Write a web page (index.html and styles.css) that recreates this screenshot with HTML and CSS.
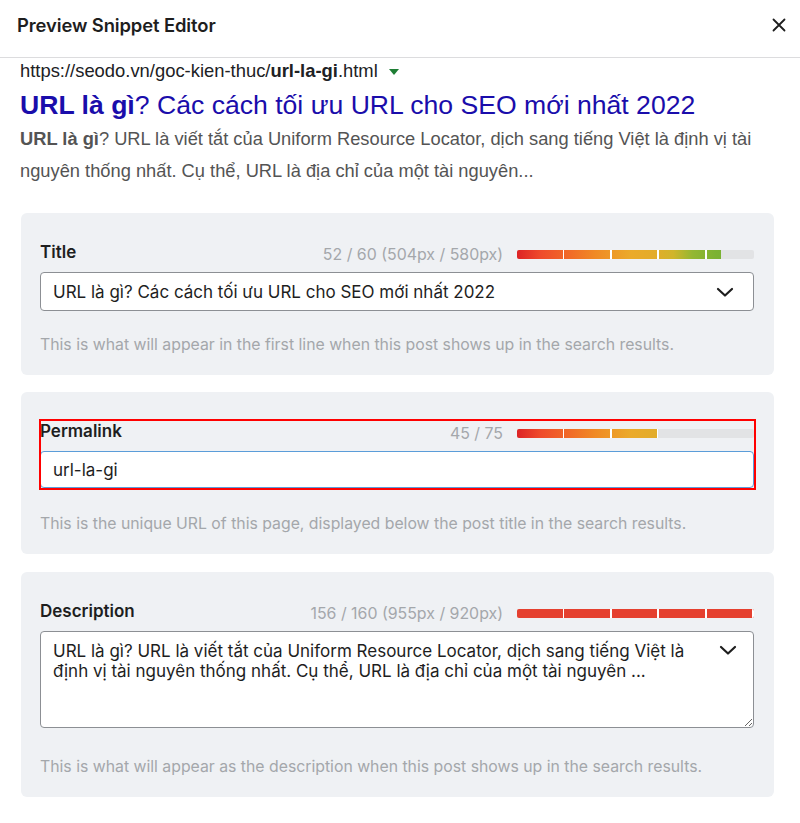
FILE: index.html
```html
<!DOCTYPE html>
<html lang="vi">
<head>
<meta charset="utf-8">
<title>Preview Snippet Editor</title>
<link rel="stylesheet" href="styles.css">
</head>
<body>
<header class="modal-header">
  <h1 class="modal-title">Preview Snippet Editor</h1>
  <button class="close-btn" aria-label="Close">
    <svg width="14" height="14" viewBox="0 0 14 14"><path d="M1.5 1.5 L12.5 12.5 M12.5 1.5 L1.5 12.5" stroke="#1e1e1e" stroke-width="1.8" stroke-linecap="round"/></svg>
  </button>
</header>

<section class="serp">
  <div class="serp-url">https://seodo.vn/goc-kien-thuc/<b>url-la-gi</b>.html <span class="serp-caret"></span></div>
  <div class="serp-title"><b>URL là gì</b>? Các cách tối ưu URL cho SEO mới nhất 2022</div>
  <div class="serp-desc"><b>URL là gì</b>? URL là viết tắt của Uniform Resource Locator, dịch sang tiếng Việt là định vị tài nguyên thống nhất. Cụ thể, URL là địa chỉ của một tài nguyên...</div>
</section>

<main class="fields">
  <div class="card">
    <div class="label-row">
      <span class="label">Title</span>
      <span class="counter">52 / 60 (504px / 580px)</span>
      <div class="bar"><div class="bar-fill grad" style="width: 86%"></div></div>
    </div>
    <div class="input input-select">
      <span class="input-text">URL là gì? Các cách tối ưu URL cho SEO mới nhất 2022</span>
      <svg class="chevron" width="18" height="12" viewBox="0 0 18 12"><path d="M2 3 L9 9.5 L16 3" fill="none" stroke="#1e1e1e" stroke-width="2.2" stroke-linecap="round" stroke-linejoin="round"/></svg>
    </div>
    <p class="help">This is what will appear in the first line when this post shows up in the search results.</p>
  </div>

  <div class="card card-permalink">
    <div class="label-row">
      <span class="label">Permalink</span>
      <span class="counter">45 / 75</span>
      <div class="bar"><div class="bar-fill grad" style="width: 59.5%"></div></div>
    </div>
    <div class="input input-focus">
      <span class="input-text">url-la-gi</span>
    </div>
    <p class="help help-permalink">This is the unique URL of this page, displayed below the post title in the search results.</p>
    <div class="highlight-box"></div>
  </div>

  <div class="card card-desc">
    <div class="label-row">
      <span class="label">Description</span>
      <span class="counter">156 / 160 (955px / 920px)</span>
      <div class="bar"><div class="bar-fill full-red" style="width: 100%"></div></div>
    </div>
    <div class="textarea-wrap">
      <textarea class="textarea">URL là gì? URL là viết tắt của Uniform Resource Locator, dịch sang tiếng Việt là định vị tài nguyên thống nhất. Cụ thể, URL là địa chỉ của một tài nguyên ...</textarea>
      <svg class="chevron chevron-overlay" width="18" height="12" viewBox="0 0 18 12"><path d="M2 3 L9 9.5 L16 3" fill="none" stroke="#1e1e1e" stroke-width="2.2" stroke-linecap="round" stroke-linejoin="round"/></svg>
    </div>
    <p class="help help-desc">This is what will appear as the description when this post shows up in the search results.</p>
  </div>
</main>
</body>
</html>
```

FILE: styles.css
```css
* { box-sizing: border-box; }
html, body { margin: 0; padding: 0; background: #fff; }
body {
  font-family: Inter, "Noto Sans", sans-serif;
  color: #1e1e1e;
  width: 800px;
}

.modal-header {
  height: 58px;
  border-bottom: 1px solid #dcdcde;
  display: flex;
  align-items: center;
  justify-content: space-between;
  padding: 0 14px 8px 17px;
}
.modal-title {
  margin: 0;
  font-size: 18.4px;
  font-weight: 600;
  letter-spacing: -0.1px;
}
.close-btn {
  border: 0;
  background: none;
  padding: 0;
  width: 14px;
  height: 14px;
  display: flex;
}

.serp {
  padding: 2px 10px 0 20px;
  font-family: "Liberation Sans", Arial, sans-serif;
}
.serp-url {
  font-size: 18.4px;
  line-height: 22px;
  color: #202124;
  display: flex;
  align-items: center;
  white-space: pre;
}
.serp-url b { font-weight: 700; }
.serp-caret {
  display: inline-block;
  width: 0; height: 0;
  border-left: 5px solid transparent;
  border-right: 5px solid transparent;
  border-top: 6px solid #1e7e34;
  margin-left: 6px;
  margin-top: 2px;
}
.serp-title {
  margin-top: 7px;
  font-size: 26.6px;
  line-height: 32px;
  color: #1a0dab;
}
.serp-title b { font-weight: 700; }
.serp-desc {
  margin-top: 2px;
  font-size: 18.3px;
  line-height: 32px;
  color: #545454;
}
.serp-desc b { color: #545454; font-weight: 700; }

.fields {
  margin: 26px 26px 0 21px;
  display: flex;
  flex-direction: column;
  gap: 17px;
}
.card {
  background: #eff1f4;
  border-radius: 6px;
  padding: 29px 20px 20px 19px;
}
.card-permalink { position: relative; }
.card-desc { margin-top: 1px; }

.label-row {
  display: flex;
  align-items: center;
  height: 20px;
  margin-bottom: 10px;
}
.label {
  font-size: 17px;
  font-weight: 600;
  color: #1e1e1e;
  flex: 1;
}
.counter {
  font-size: 15.9px;
  color: #a4a7ab;
  margin-right: 14px;
  margin-top: 4px;
}
.bar {
  width: 237px;
  height: 9px;
  background: #e2e3e5;
  border-radius: 2px;
  overflow: hidden;
  margin-top: 4px;
}
.bar-fill {
  height: 100%;
  position: relative;
}
.bar-fill::after {
  content: "";
  position: absolute;
  inset: 0;
  background: repeating-linear-gradient(to right, transparent 0, transparent 45.6px, #fff 45.6px, #fff 47.4px);
}
.grad {
  background: linear-gradient(to right, #dd2325 0%, #ef4b2b 10%, #f16a27 22%, #f08a24 33%, #ebaa2a 48%, #e3ac2a 58%, #d0b52b 66%, #94b732 74%, #7bb233 84%, #74ae30 100%);
  background-size: 237px 100%;
  background-repeat: no-repeat;
}
.full-red { background: #e5402f; }

.input {
  background: #fff;
  border: 1px solid #8c8f94;
  border-radius: 4px;
  display: flex;
  align-items: center;
  font-size: 17px;
  color: #1e1e1e;
}
.input-select {
  height: 39px;
  padding: 0 19px 0 12px;
  justify-content: space-between;
}
.input-focus {
  height: 37px;
  padding: 0 12px;
  border-color: #5b9dd9;
}
.input-text { white-space: nowrap; }

.help {
  margin: 24px 0 0 0;
  font-size: 15.8px;
  line-height: 20px;
  color: #a4a7ab;
}
.help-permalink { margin-top: 26px; }
.help-desc { margin-top: 29px; }

.textarea-wrap { position: relative; }
.textarea {
  display: block;
  width: 100%;
  height: 97px;
  resize: vertical;
  font-family: Inter, "Noto Sans", sans-serif;
  font-size: 17px;
  line-height: 20px;
  color: #1e1e1e;
  border: 1px solid #8c8f94;
  border-radius: 4px;
  padding: 9px 44px 6px 12px;
  background: #fff;
}
.chevron-overlay {
  position: absolute;
  right: 17px;
  top: 13px;
}

.highlight-box {
  position: absolute;
  left: 18px;
  top: 27px;
  width: 717px;
  height: 71px;
  border: 2px solid #ff0000;
  pointer-events: none;
}
```
